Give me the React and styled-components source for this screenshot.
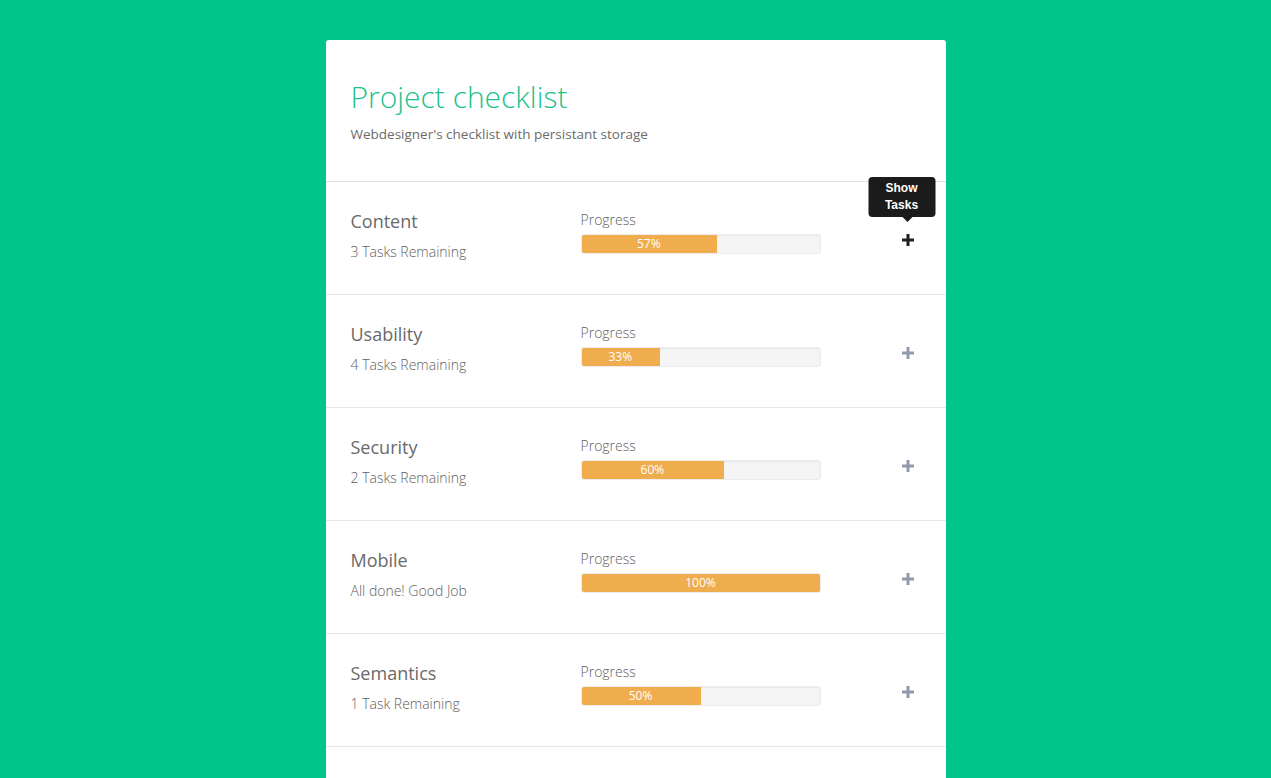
import styled, { createGlobalStyle } from "styled-components";

const GlobalStyle = createGlobalStyle`
  html, body {
    margin: 0;
    padding: 0;
    background: #00c68b;
    font-family: "Open Sans", "Liberation Sans", sans-serif;
    overflow: hidden;
  }
`;

const Page = styled.div`
  padding-top: 40px;
  display: flex;
  justify-content: center;
`;

// Card
const Card = styled.div`
  width: 620px;
  background: #fff;
  border-radius: 3px 3px 0 0;
  padding-bottom: 60px;
`;

const Header = styled.div`
  padding: 37px 25px 37px;
  border-bottom: 1px solid #e0e0e0;
`;

const Title = styled.h1`
  margin: 0;
  font-size: 30px;
  font-weight: 300;
  line-height: 40px;
  color: #1dc28a;
`;

const Subtitle = styled.p`
  margin: 7px 0 0;
  font-size: 13.5px;
  font-weight: 400;
  line-height: 20px;
  color: #6b6b6b;
`;

// Row
const Row = styled.div`
  height: 112px;
  border-bottom: 1px solid #e8e8e8;
  display: grid;
  grid-template-columns: 230px 240px 1fr;
  align-items: start;
  padding-left: 25px;
  box-sizing: content-box;
`;

const Info = styled.div`
  padding-top: 27px;
`;

const Name = styled.div`
  font-size: 18px;
  font-weight: 400;
  color: #6a6a6a;
  line-height: 24px;
`;

const Remaining = styled.div`
  margin-top: 9px;
  font-size: 14px;
  font-weight: 300;
  color: #5e5e5e;
  line-height: 20px;
`;

const Progress = styled.div`
  padding-top: 29px;
`;

const Label = styled.div`
  font-size: 14px;
  font-weight: 300;
  color: #5e5e5e;
  line-height: 18px;
  margin-bottom: 5px;
`;

const Track = styled.div`
  height: 20px;
  background: #f5f5f5;
  border-radius: 3px;
  box-shadow: inset 0 1px 2px rgba(0, 0, 0, 0.06);
  border: 1px solid #ececec;
  box-sizing: border-box;
  overflow: hidden;
`;

const Fill = styled.div`
  height: 20px;
  margin: -1px 0 0 -1px;
  background: #f0ad4e;
  border-bottom: 1px solid #d4913a;
  box-sizing: border-box;
  color: #fff;
  font-size: 12px;
  line-height: 20px;
  text-align: center;
  border-radius: ${(p) => (p.$full ? "3px" : "3px 0 0 3px")};
`;

const Toggle = styled.div`
  position: relative;
  justify-self: end;
  margin: 51px 31px 0 0;
  width: 14px;
  height: 14px;
  display: flex;
  align-items: center;
  justify-content: center;
`;

const Tooltip = styled.div`
  position: absolute;
  bottom: 30px;
  left: 50%;
  transform: translateX(calc(-50% - 6px));
  width: 67px;
  background: #1b1b1b;
  border-radius: 4px;
  color: #fff;
  font-family: "Liberation Sans", Arial, sans-serif;
  font-weight: 700;
  font-size: 12px;
  line-height: 17px;
  text-align: center;
  padding: 3px 0 3px;

  &::after {
    content: "";
    position: absolute;
    top: 100%;
    left: calc(50% + 6px);
    margin-left: -5px;
    border: 5px solid transparent;
    border-top-color: #1b1b1b;
    border-bottom: 0;
  }
`;

const Plus = ({ color }) => (
  <svg width="12" height="12" viewBox="0 0 12 12">
    <rect x="4.5" y="0" width="3" height="12" fill={color} />
    <rect x="0" y="4.5" width="12" height="3" fill={color} />
  </svg>
);

const items = [
  { name: "Content", sub: "3 Tasks Remaining", pct: 57, active: true },
  { name: "Usability", sub: "4 Tasks Remaining", pct: 33 },
  { name: "Security", sub: "2 Tasks Remaining", pct: 60 },
  { name: "Mobile", sub: "All done! Good Job", pct: 100 },
  { name: "Semantics", sub: "1 Task Remaining", pct: 50 },
];

export default function App() {
  return (
    <>
      <GlobalStyle />
      <Page>
        <Card>
          <Header>
            <Title>Project checklist</Title>
            <Subtitle>Webdesigner's checklist with persistant storage</Subtitle>
          </Header>
          {items.map((it) => (
            <Row key={it.name}>
              <Info>
                <Name>{it.name}</Name>
                <Remaining>{it.sub}</Remaining>
              </Info>
              <Progress>
                <Label>Progress</Label>
                <Track>
                  <Fill $full={it.pct === 100} style={{ width: `calc(${it.pct}% + ${it.pct === 100 ? 2 : 1}px)` }}>
                    {it.pct}%
                  </Fill>
                </Track>
              </Progress>
              <Toggle>
                {it.active && (
                  <Tooltip>
                    Show
                    <br />
                    Tasks
                  </Tooltip>
                )}
                <Plus color={it.active ? "#1e1e1e" : "#929aab"} />
              </Toggle>
            </Row>
          ))}
        </Card>
      </Page>
    </>
  );
}
